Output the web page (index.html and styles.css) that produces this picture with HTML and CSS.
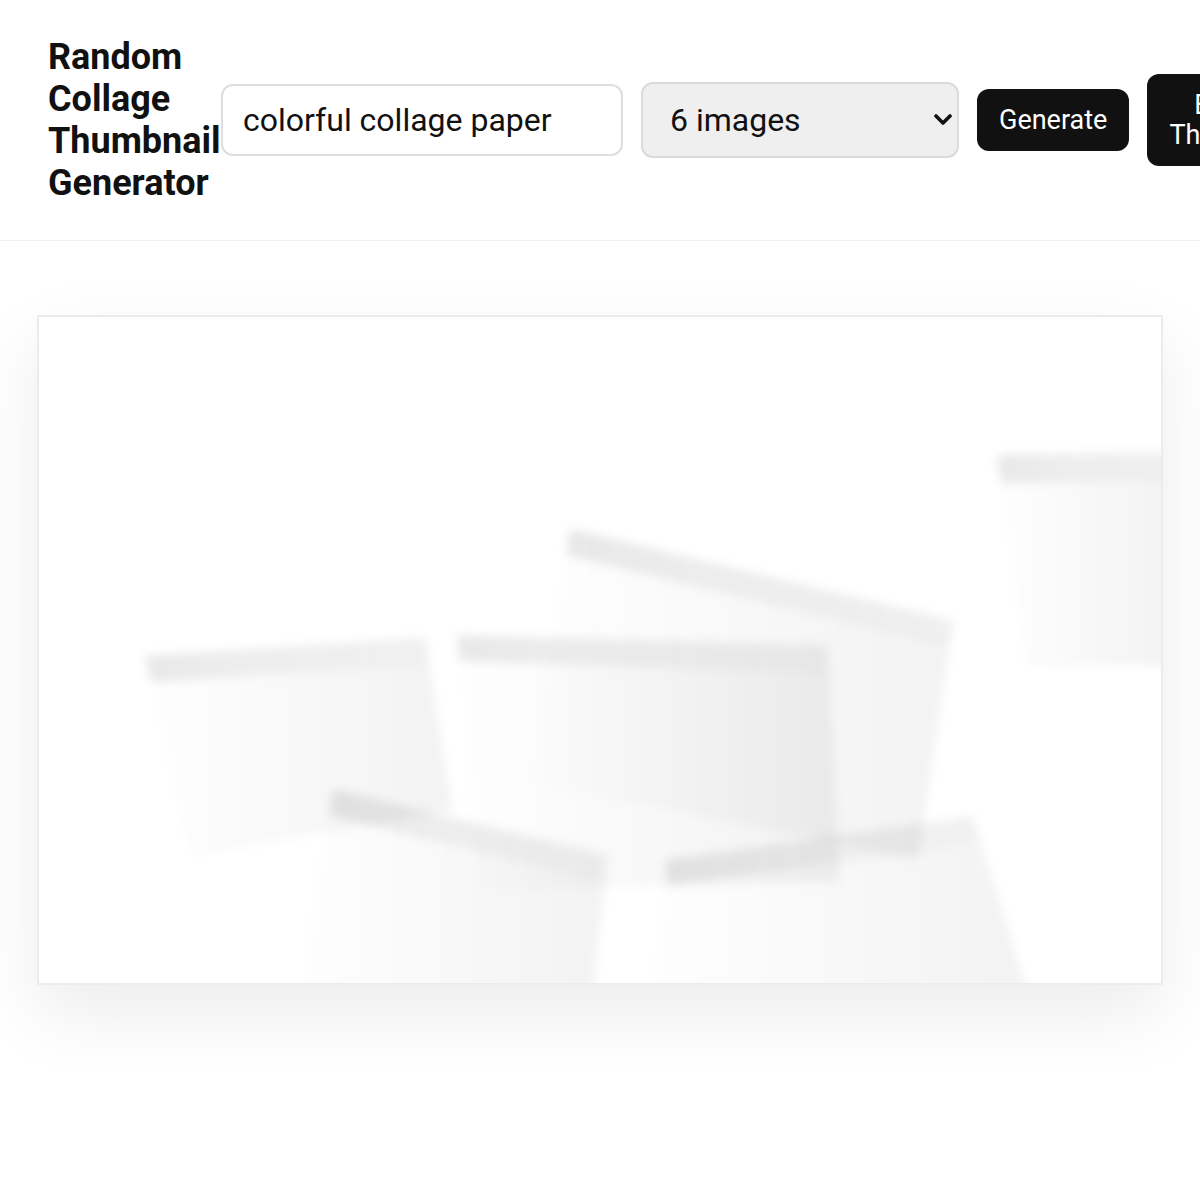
FILE: index.html
```html
<!DOCTYPE html>
<html>
<head>
    <title>Random Collage Thumbnail Generator</title>
    <meta charset="UTF-8">
    <meta name="viewport" content="width=device-width, initial-scale=1.0">
    <link rel="stylesheet" href="styles.css">
</head>
<body>

<header class="toolbar">
    <h1 class="title">Random Collage Thumbnail Generator</h1>
    <input type="text" class="query" value="colorful collage paper">
    <div class="count">
        <select>
            <option>3 images</option>
            <option>4 images</option>
            <option>5 images</option>
            <option selected>6 images</option>
            <option>8 images</option>
            <option>10 images</option>
        </select>
        <svg class="chevron" viewBox="0 0 20 12" width="20" height="12">
            <path d="M3 2 L10 9 L17 2" fill="none" stroke="#111" stroke-width="3.6" stroke-linecap="round" stroke-linejoin="round"/>
        </svg>
    </div>
    <button class="btn">Generate</button>
    <button class="btn">Export Thumbnail</button>
</header>

<main class="stage">
    <div class="collage">
        <svg class="tiles" viewBox="0 0 1122 666" preserveAspectRatio="none">
            <defs>
                <linearGradient id="tileFill" x1="0" y1="0" x2="1" y2="0">
                    <stop offset="0" stop-color="#000" stop-opacity="0.004"/>
                    <stop offset="1" stop-color="#000" stop-opacity="0.05"/>
                </linearGradient>
                <linearGradient id="tapeFill" x1="0" y1="0" x2="1" y2="0">
                    <stop offset="0" stop-color="#000" stop-opacity="0.085"/>
                    <stop offset="0.35" stop-color="#000" stop-opacity="0.05"/>
                    <stop offset="1" stop-color="#000" stop-opacity="0.012"/>
                </linearGradient>
                <filter id="soft" x="-10%" y="-10%" width="120%" height="120%">
                    <feGaussianBlur stdDeviation="5"/>
                </filter>
            </defs>
            <g filter="url(#soft)">
                <!-- far right -->
                <polygon class="tile" points="958,136 1141,135 1141,348 988,350"/>
                <polygon class="tape" points="958,138 1141,137 1141,165 962,166"/>
                <!-- upper middle -->
                <polygon class="tile" points="531,210 914,303 879,543 496,465"/>
                <polygon class="tape" points="531,212 914,305 910,331 527,238"/>
                <!-- left -->
                <polygon class="tile" points="106,337 386,320 413,493 151,539"/>
                <polygon class="tape" points="106,339 386,322 390,348 112,365"/>
                <!-- middle -->
                <polygon class="tile" points="418,316 789,328 801,565 441,573"/>
                <polygon class="tape" points="418,318 789,330 790,356 420,344"/>
                <!-- bottom left -->
                <polygon class="tile" points="294,470 568,538 553,683 261,683"/>
                <polygon class="tape" points="294,472 568,540 566,566 290,498"/>
                <!-- bottom right -->
                <polygon class="tile" points="626,541 934,499 991,683 611,683"/>
                <polygon class="tape" points="626,543 934,501 938,527 628,569"/>
            </g>
        </svg>
    </div>
</main>

</body>
</html>
```

FILE: styles.css
```css
/* Global styles */
body {
    background-color: #ffffff;
    color: #111111;
    font-family: Roboto, "Liberation Sans", Arial, sans-serif;
    margin: 0;
    padding: 0;
    overflow-x: hidden;
}

/* Top toolbar */
.toolbar {
    display: flex;
    align-items: center;
    gap: 18px;
    padding: 36px 48px;
    border-bottom: 1px solid #efefef;
}

.title {
    flex: none;
    width: 155px;
    margin: 0;
    font-size: 36px;
    line-height: 42px;
    font-weight: 700;
    color: #111111;
}

.query {
    flex: none;
    box-sizing: border-box;
    width: 402px;
    height: 72px;
    padding: 0 20px;
    border: 2px solid #dedede;
    border-radius: 12px;
    font-family: inherit;
    font-size: 32px;
    color: #111111;
    background: #ffffff;
}

.count {
    flex: none;
    position: relative;
}

.count select {
    display: block;
    box-sizing: border-box;
    width: 318px;
    height: 76px;
    padding: 0 27px;
    appearance: none;
    -webkit-appearance: none;
    background-color: #efefef;
    border: 2px solid #dadada;
    border-radius: 12px;
    font-family: inherit;
    font-size: 32px;
    color: #111111;
}

.chevron {
    position: absolute;
    right: 6px;
    top: 50%;
    transform: translateY(-50%);
    pointer-events: none;
}

.btn {
    flex: none;
    background-color: #111111;
    color: #ffffff;
    border: none;
    border-radius: 12px;
    padding: 16px 22px;
    font-family: inherit;
    font-size: 27px;
    line-height: 30px;
    cursor: pointer;
}

.btn:last-child {
    flex: 0 1 auto;
}

.btn:hover {
    background-color: #333333;
}

/* Collage area */
.stage {
    padding: 74px 37px 120px;
}

.collage {
    position: relative;
    box-sizing: border-box;
    height: 670px;
    border: 2px solid #ececec;
    background: #ffffff;
    overflow: hidden;
    box-shadow: 0 28px 70px rgba(0, 0, 0, 0.08);
}

.tiles {
    display: block;
    width: 100%;
    height: 100%;
}

.tile {
    fill: url(#tileFill);
}

.tape {
    fill: url(#tapeFill);
}
```
